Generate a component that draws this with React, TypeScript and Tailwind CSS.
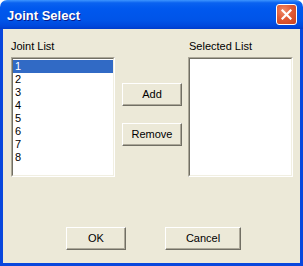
import React from "react";

const font = { fontFamily: '"Liberation Sans", Arial, sans-serif' };

function ClassicButton({ label, className }: { label: string; className: string }) {
  return (
    <button
      className={`h-[23px] bg-[#ece9d8] border border-t-white border-l-white border-b-[#716f64] border-r-[#716f64] shadow-[inset_-1px_-1px_0_#aca899] text-[11px] leading-[13px] text-black ${className}`}
    >
      {label}
    </button>
  );
}

function ListBox({ items, selected }: { items: string[]; selected?: number }) {
  return (
    <div className="h-[120px] w-full border border-t-[#aca899] border-l-[#aca899] border-b-white border-r-white">
      <div className="h-full w-full bg-white border border-t-[#716f64] border-l-[#716f64] border-b-[#f1efe2] border-r-[#f1efe2] pt-px">
        {items.map((it, i) => (
          <div
            key={it}
            className={`h-[13px] pl-[2px] text-[11px] leading-[13px] ${
              i === selected ? "bg-[#316ac5] text-white" : "text-black"
            }`}
          >
            {it}
          </div>
        ))}
      </div>
    </div>
  );
}

export default function App() {
  const joints = ["1", "2", "3", "4", "5", "6", "7", "8"];

  return (
    <div className="w-[303px] h-[266px] bg-white flex flex-col select-none" style={font}>
      {/* title bar */}
      <div className="h-[29px] shrink-0 rounded-t-[7px] bg-[linear-gradient(to_bottom,#3d95ff_0%,#0a62f0_10%,#0058ee_30%,#0054e8_70%,#0048dc_90%,#003ccb_100%)] flex items-center pl-[7px] pr-[6px]">
        <span className="text-white font-bold text-[13px] leading-[13px] mt-[1px] [text-shadow:1px_1px_0_#0a1a8a]">
          Joint Select
        </span>
        <div className="ml-auto w-[21px] h-[21px] rounded-[3px] border border-white bg-[radial-gradient(circle_at_35%_30%,#f08c6a_0%,#e05a35_45%,#c9411c_100%)] flex items-center justify-center">
          <svg width="11" height="11" viewBox="0 0 11 11">
            <path d="M1.5 1.5 L9.5 9.5 M9.5 1.5 L1.5 9.5" stroke="white" strokeWidth="2.2" strokeLinecap="square" />
          </svg>
        </div>
      </div>

      {/* body with blue frame */}
      <div className="flex-1 bg-[#0847dd] px-[3px] pb-[3px] flex flex-col">
        <div className="flex-1 bg-[#ece9d8] flex flex-col pt-[11px]">
          <div className="flex pl-[8px]">
            <div className="w-[104px] flex flex-col">
              <div className="text-[11px] leading-[13px] text-black mb-[4px]">Joint List</div>
              <ListBox items={joints} selected={0} />
            </div>
            <div className="ml-[7px] w-[60px] flex flex-col pt-[43px] gap-[17px]">
              <ClassicButton label="Add" className="w-[60px]" />
              <ClassicButton label="Remove" className="w-[60px]" />
            </div>
            <div className="ml-[6px] w-[105px] flex flex-col">
              <div className="text-[11px] leading-[13px] text-black mb-[4px] pl-px">Selected List</div>
              <ListBox items={[]} />
            </div>
          </div>
          <div className="flex pl-[63px] mt-[50px] gap-[39px]">
            <ClassicButton label="OK" className="w-[60px]" />
            <ClassicButton label="Cancel" className="w-[76px]" />
          </div>
        </div>
      </div>
    </div>
  );
}
